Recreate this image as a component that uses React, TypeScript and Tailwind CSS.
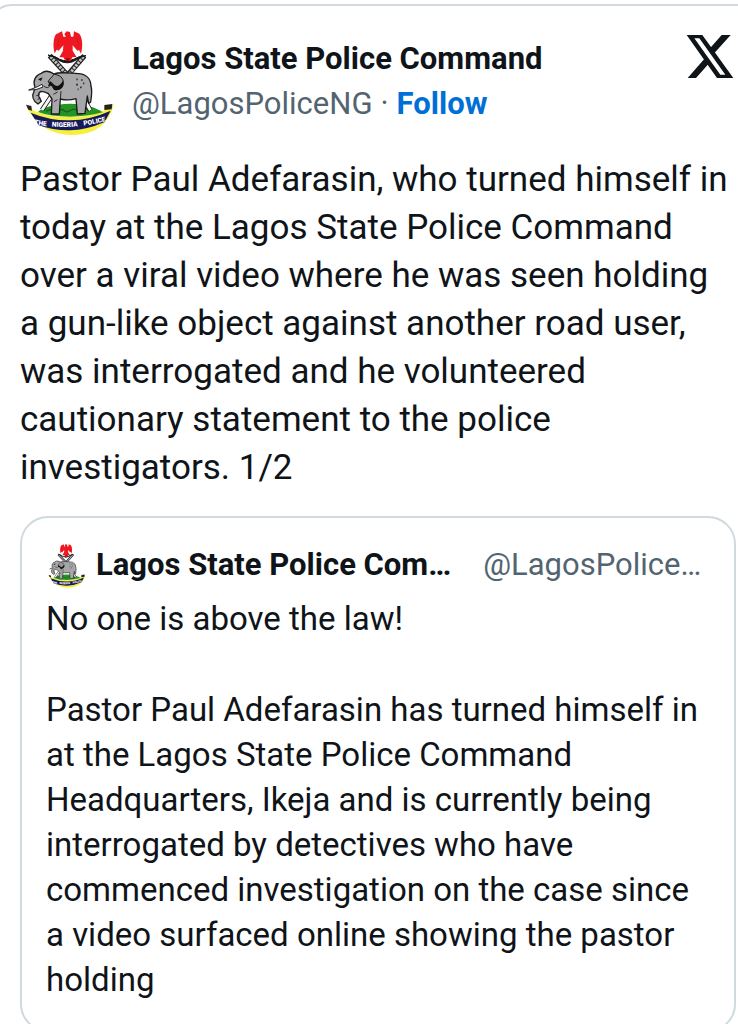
import { useId } from 'react';
import { clsx } from 'clsx';

function PoliceCrest({ className }: { className?: string }) {
  const curveId = useId();

  return (
    <svg viewBox="30 30 300 330" className={clsx('shrink-0', className)} role="img" aria-label="Nigeria Police crest">
      {/* Ribbon */}
      <path d="M48 266 Q80 302 180 303 Q270 302 311 264 L306 284 Q288 326 250 345 Q178 372 112 340 Q66 312 48 266Z" fill="#f5f03c" />
      <path d="M48 266 L64 270 L66 284 L55 281Z M283 267 L307 264 L305 280 L283 282Z" fill="#252416" />
      <path d="M62 290 Q120 314 180 313 Q240 312 302 284 L284 318 Q230 342 180 343 Q130 344 86 328Z" fill="#161a5c" />
      <path id={curveId} d="M72 325 Q180 345 292 314" fill="none" />
      {/* Grass */}
      <path d="M84 288 Q106 266 180 263 Q248 265 278 289 Q230 302 180 302 Q120 302 84 288Z" fill="#259425" />
      <path d="M108 285l18-6 12 8 18-7 14 8 22-9 16 8 20-8 14 6" stroke="#126318" strokeWidth="4" fill="none" />
      {/* Crossed staffs */}
      <path d="M119 119 L169 174 M223 119 L176 174" stroke="#222" strokeWidth="16" />
      <path d="M122 122 L169 174 M220 122 L178 174" stroke="#c4c4c4" strokeWidth="9" strokeDasharray="7 3" />
      <path d="M134 225 L96 282 M207 222 L241 283" stroke="#171717" strokeWidth="14" />
      <path d="M134 225 L96 282 M207 222 L241 283" stroke="#f4f4f4" strokeWidth="9" />
      {/* Elephant */}
      <path
        d="M75 213 C68 196 75 178 94 172 C106 162 122 167 132 174 C151 166 180 172 205 173 C228 174 242 188 243 210 C247 224 245 240 242 258 L236 262 L232 240 L225 292 L202 294 L198 248 Q174 255 151 249 L148 294 L124 294 L126 249 L115 233 Q102 226 93 226 C82 231 86 244 90 248 L94 256 L84 264 C68 254 65 239 72 226Z"
        fill="#a7a7a9"
        stroke="#1b1b1b"
        strokeWidth="4"
        strokeLinejoin="round"
      />
      <path d="M132 174 C150 178 160 185 160 200 C161 216 145 224 137 219 C125 219 127 202 114 198 C118 188 126 185 132 174Z" fill="#989899" stroke="#161616" strokeWidth="3" />
      <path d="M159 194 Q165 216 144 222 Q128 227 128 210 L114 209 L120 195 L128 202 Q142 222 159 194Z M84 190l14-6-5 11z" fill="#111" />
      <path d="M56 222 Q77 216 96 205 L99 213 Q79 224 56 222Z" fill="#fff" stroke="#222" strokeWidth="3" />
      <path d="M101 210 Q115 222 122 205 M79 239l10-3 M83 250l9-4 M130 235l13-7 M132 257l10-6 M151 249l2-24" stroke="#292929" strokeWidth="3" fill="none" />
      <path d="M199 190h4m10 2h5m-20 14h6m6 8h5m-12 6h3m13-18h4" stroke="#333" strokeWidth="5" />
      {/* Wreath and eagle */}
      <path d="M114 117 Q140 121 149 130 Q171 139 193 129 Q207 119 228 119 Q211 123 200 131 Q173 149 146 133 Q132 122 114 117Z" fill="#171717" stroke="#171717" strokeWidth="3" />
      <path
        d="M134 112 C128 92 130 66 138 55 L156 46 L160 62 L168 62 L163 54 L170 46 L180 48 L183 62 L190 62 L192 46 L208 53 C218 66 219 92 213 113 L207 102 L202 104 L188 88 L188 104 L200 124 L188 123 L180 136 L166 134 L160 124 L148 124 L159 104 L160 88 L146 104 L140 101Z"
        fill="#f01820"
      />
      <path d="M146 66l-3 28M202 66l3 28" stroke="#c5141c" strokeWidth="2" />
      <path d="M168 126h12l-4 9h-6z" fill="#8e1015" />
      <text fill="#fff" fontSize="20" fontWeight="900" className="font-['Roboto',sans-serif]">
        <textPath href={`#${curveId}`} startOffset="0">THE</textPath>
      </text>
      <text fill="#fff" fontSize="20" fontWeight="900" className="font-['Roboto',sans-serif]">
        <textPath href={`#${curveId}`} startOffset="54">NIGERIA</textPath>
      </text>
      <text fill="#fff" fontSize="20" fontWeight="900" className="font-['Roboto',sans-serif]">
        <textPath href={`#${curveId}`} startOffset="150">POLICE</textPath>
      </text>
    </svg>
  );
}

function XLogo() {
  return (
    <svg viewBox="78 100 144 135" className="w-12 h-[45px]" fill="currentColor" aria-hidden="true">
      <path d="M185 103h27l-52 58-12-16zM83 232h25l42-47-12-16z" />
      <path fillRule="evenodd" d="M80 103h47l93 129h-49zM103 113l78 109h15L118 113z" />
    </svg>
  );
}

export default function App() {
  return (
    <main className="h-screen overflow-hidden bg-white pt-1 font-['Roboto',sans-serif] text-[#0f1419]">
      <article className="-ml-3 -mr-8 rounded-3xl border-2 border-[#cfd9de] pl-[30px] pr-8 pt-5 pb-8">
        {/* Author */}
        <header className="flex items-start">
          <PoliceCrest className="w-[100px] h-[110px]" />
          <div className="ml-3 pt-2.5 flex-1 min-w-0">
            <h1 className="text-[31px] leading-[45px] font-bold">Lagos State Police Command</h1>
            <div className="flex gap-2 text-[31px] leading-[45px]">
              <a href="#profile" className="text-[#536471]">@LagosPoliceNG</a>
              <span className="text-[#536471]">·</span>
              <a href="#follow" className="font-bold text-[#006fd6]">Follow</a>
            </div>
          </div>
          <a href="#post" aria-label="View on X" className="mt-2 mr-0.5">
            <XLogo />
          </a>
        </header>

        <p className="mt-5 text-[35px] leading-[48px] whitespace-pre-line">
          {`Pastor Paul Adefarasin, who turned himself in
          today at the Lagos State Police Command
          over a viral video where he was seen holding
          a gun-like object against another road user,
          was interrogated and he volunteered
          cautionary statement to the police
          investigators. 1/2`}
        </p>

        {/* Quoted post */}
        <section className="mt-6 rounded-[28px] border-2 border-[#cfd9de] px-6 pt-6 pb-7">
          <header className="flex items-center">
            <PoliceCrest className="w-[42px] h-[46px]" />
            <h2 className="ml-2 text-[31px] leading-[46px] font-bold whitespace-nowrap">Lagos State Police Com…</h2>
            <span className="ml-8 text-[31px] leading-[46px] text-[#536471] whitespace-nowrap">@LagosPolice…</span>
          </header>
          <div className="mt-2 flex flex-col gap-[46px] text-[33px] leading-[45px] whitespace-pre-line">
            <p>No one is above the law!</p>
            <p>
              {`Pastor Paul Adefarasin has turned himself in
              at the Lagos State Police Command
              Headquarters, Ikeja and is currently being
              interrogated by detectives who have
              commenced investigation on the case since
              a video surfaced online showing the pastor
              holding`}
            </p>
          </div>
        </section>
      </article>
    </main>
  );
}
